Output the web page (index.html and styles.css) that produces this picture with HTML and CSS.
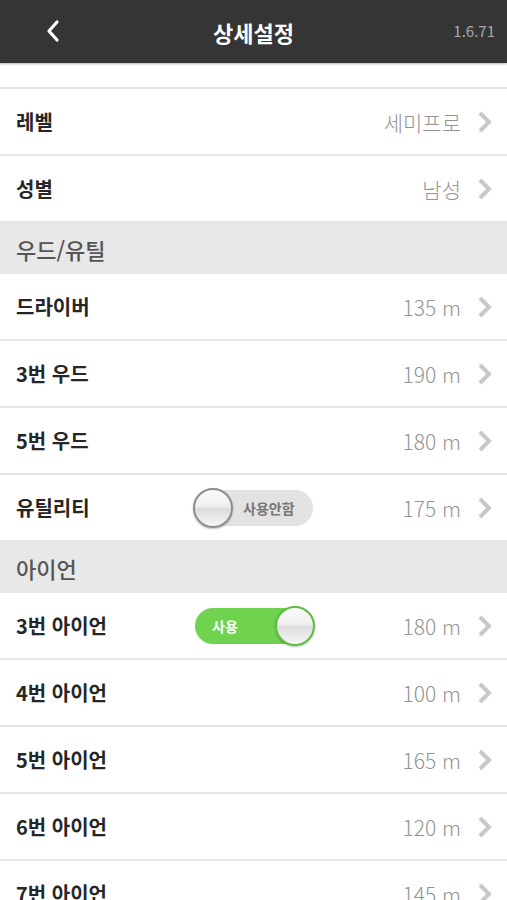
FILE: index.html
```html
<!DOCTYPE html>
<html lang="ko">
<head>
  <meta charset="UTF-8" />
  <meta name="viewport" content="width=device-width, initial-scale=1" />
  <title>상세설정</title>
  <link rel="stylesheet" href="styles.css">
</head>
<body>
  <!-- Top bar -->
  <div class="topbar">
    <svg class="back" width="16" height="24" viewBox="0 0 16 24">
      <path d="M12 3 L4 12 L12 21" fill="none" stroke="#fff" stroke-width="3.2" stroke-linecap="round" stroke-linejoin="round"/>
    </svg>
    <div class="title">상세설정</div>
    <div class="version">1.6.71</div>
  </div>

  <div class="list">
    <div class="row first">
      <span class="label">나이(세)</span>
      <span class="spacer"></span>
      <span class="value">40 세</span>
      <svg class="chev" width="16" height="24" viewBox="0 0 16 24"><path d="M3 3 L12 12 L3 21" fill="none" stroke="#c8c8c8" stroke-width="4"/></svg>
    </div>
    <div class="row">
      <span class="label">레벨</span>
      <span class="spacer"></span>
      <span class="value">세미프로</span>
      <svg class="chev" width="16" height="24" viewBox="0 0 16 24"><path d="M3 3 L12 12 L3 21" fill="none" stroke="#c8c8c8" stroke-width="4"/></svg>
    </div>
    <div class="row">
      <span class="label">성별</span>
      <span class="spacer"></span>
      <span class="value">남성</span>
      <svg class="chev" width="16" height="24" viewBox="0 0 16 24"><path d="M3 3 L12 12 L3 21" fill="none" stroke="#c8c8c8" stroke-width="4"/></svg>
    </div>

    <div class="section">우드/유틸</div>
    <div class="row">
      <span class="label">드라이버</span>
      <span class="spacer"></span>
      <span class="value">135 m</span>
      <svg class="chev" width="16" height="24" viewBox="0 0 16 24"><path d="M3 3 L12 12 L3 21" fill="none" stroke="#c8c8c8" stroke-width="4"/></svg>
    </div>
    <div class="row">
      <span class="label">3번 우드</span>
      <span class="spacer"></span>
      <span class="value">190 m</span>
      <svg class="chev" width="16" height="24" viewBox="0 0 16 24"><path d="M3 3 L12 12 L3 21" fill="none" stroke="#c8c8c8" stroke-width="4"/></svg>
    </div>
    <div class="row">
      <span class="label">5번 우드</span>
      <span class="spacer"></span>
      <span class="value">180 m</span>
      <svg class="chev" width="16" height="24" viewBox="0 0 16 24"><path d="M3 3 L12 12 L3 21" fill="none" stroke="#c8c8c8" stroke-width="4"/></svg>
    </div>
    <div class="row">
      <span class="label">유틸리티</span>
      <div class="toggle off"><span class="knob"></span><span class="toggle-text">사용안함</span></div>
      <span class="spacer"></span>
      <span class="value">175 m</span>
      <svg class="chev" width="16" height="24" viewBox="0 0 16 24"><path d="M3 3 L12 12 L3 21" fill="none" stroke="#c8c8c8" stroke-width="4"/></svg>
    </div>

    <div class="section">아이언</div>
    <div class="row">
      <span class="label">3번 아이언</span>
      <div class="toggle on"><span class="toggle-text">사용</span><span class="knob"></span></div>
      <span class="spacer"></span>
      <span class="value">180 m</span>
      <svg class="chev" width="16" height="24" viewBox="0 0 16 24"><path d="M3 3 L12 12 L3 21" fill="none" stroke="#c8c8c8" stroke-width="4"/></svg>
    </div>
    <div class="row">
      <span class="label">4번 아이언</span>
      <span class="spacer"></span>
      <span class="value">100 m</span>
      <svg class="chev" width="16" height="24" viewBox="0 0 16 24"><path d="M3 3 L12 12 L3 21" fill="none" stroke="#c8c8c8" stroke-width="4"/></svg>
    </div>
    <div class="row">
      <span class="label">5번 아이언</span>
      <span class="spacer"></span>
      <span class="value">165 m</span>
      <svg class="chev" width="16" height="24" viewBox="0 0 16 24"><path d="M3 3 L12 12 L3 21" fill="none" stroke="#c8c8c8" stroke-width="4"/></svg>
    </div>
    <div class="row">
      <span class="label">6번 아이언</span>
      <span class="spacer"></span>
      <span class="value">120 m</span>
      <svg class="chev" width="16" height="24" viewBox="0 0 16 24"><path d="M3 3 L12 12 L3 21" fill="none" stroke="#c8c8c8" stroke-width="4"/></svg>
    </div>
    <div class="row">
      <span class="label">7번 아이언</span>
      <span class="spacer"></span>
      <span class="value">145 m</span>
      <svg class="chev" width="16" height="24" viewBox="0 0 16 24"><path d="M3 3 L12 12 L3 21" fill="none" stroke="#c8c8c8" stroke-width="4"/></svg>
    </div>
  </div>
</body>
</html>
```

FILE: styles.css
```css
body {
  margin: 0;
  font-family: 'Noto Sans CJK KR', 'Noto Sans', sans-serif;
  background: #fff;
  height: 900px;
  overflow: hidden;
}
.topbar {
  position: relative;
  z-index: 2;
  height: 63px;
  background: #353535;
  display: flex;
  align-items: center;
  justify-content: center;
  box-shadow: 0 1px 2px rgba(0, 0, 0, 0.3);
}
.back {
  position: absolute;
  left: 45px;
  top: 19px;
}
.title {
  color: #fff;
  font-size: 22px;
  font-weight: bold;
}
.version {
  position: absolute;
  right: 12px;
  top: 20px;
  color: #a8a8a8;
  font-size: 15px;
}
.list {
  height: 837px;
  overflow: hidden;
}
.row {
  height: 65px;
  border-bottom: 2px solid #e6e6e6;
  display: flex;
  align-items: center;
  padding: 0 14px 0 16px;
}
.row.first {
  margin-top: -41px;
  height: 53px;
  padding-top: 12px;
  align-items: flex-start;
}
.label {
  width: 179px;
  font-size: 20px;
  font-weight: bold;
  color: #262626;
}
.spacer {
  flex: 1;
}
.value {
  font-size: 21px;
  font-weight: 300;
  color: #939393;
  margin-right: 16px;
}
.chev {
  display: block;
}
.section {
  height: 51px;
  background: #e8e8e8;
  display: flex;
  align-items: center;
  padding: 0 16px;
  font-size: 22px;
  color: #555;
  font-weight: 500;
}
.toggle {
  width: 118px;
  height: 36px;
  border-radius: 18px;
  display: flex;
  align-items: center;
  position: relative;
}
.toggle.off {
  background: #e2e2e2;
}
.toggle.on {
  background: #6fd350;
  justify-content: space-between;
}
.toggle-text {
  font-size: 14px;
  font-weight: bold;
}
.toggle.off .toggle-text {
  color: #767676;
  margin-left: 12px;
}
.toggle.on .toggle-text {
  color: #fff;
  margin-left: 17px;
}
.knob {
  width: 40px;
  height: 40px;
  margin: -2px;
  border-radius: 50%;
  background: linear-gradient(#fafafa 0%, #f0f0f0 45%, #dcdcdc 52%, #f6f6f6 100%);
  box-sizing: border-box;
  box-shadow: 0 1px 2px rgba(0, 0, 0, 0.25);
}
.toggle.off .knob {
  border: 2px solid #8d8d8d;
}
.toggle.on .knob {
  border: 2px solid #5cbd3e;
}
```
